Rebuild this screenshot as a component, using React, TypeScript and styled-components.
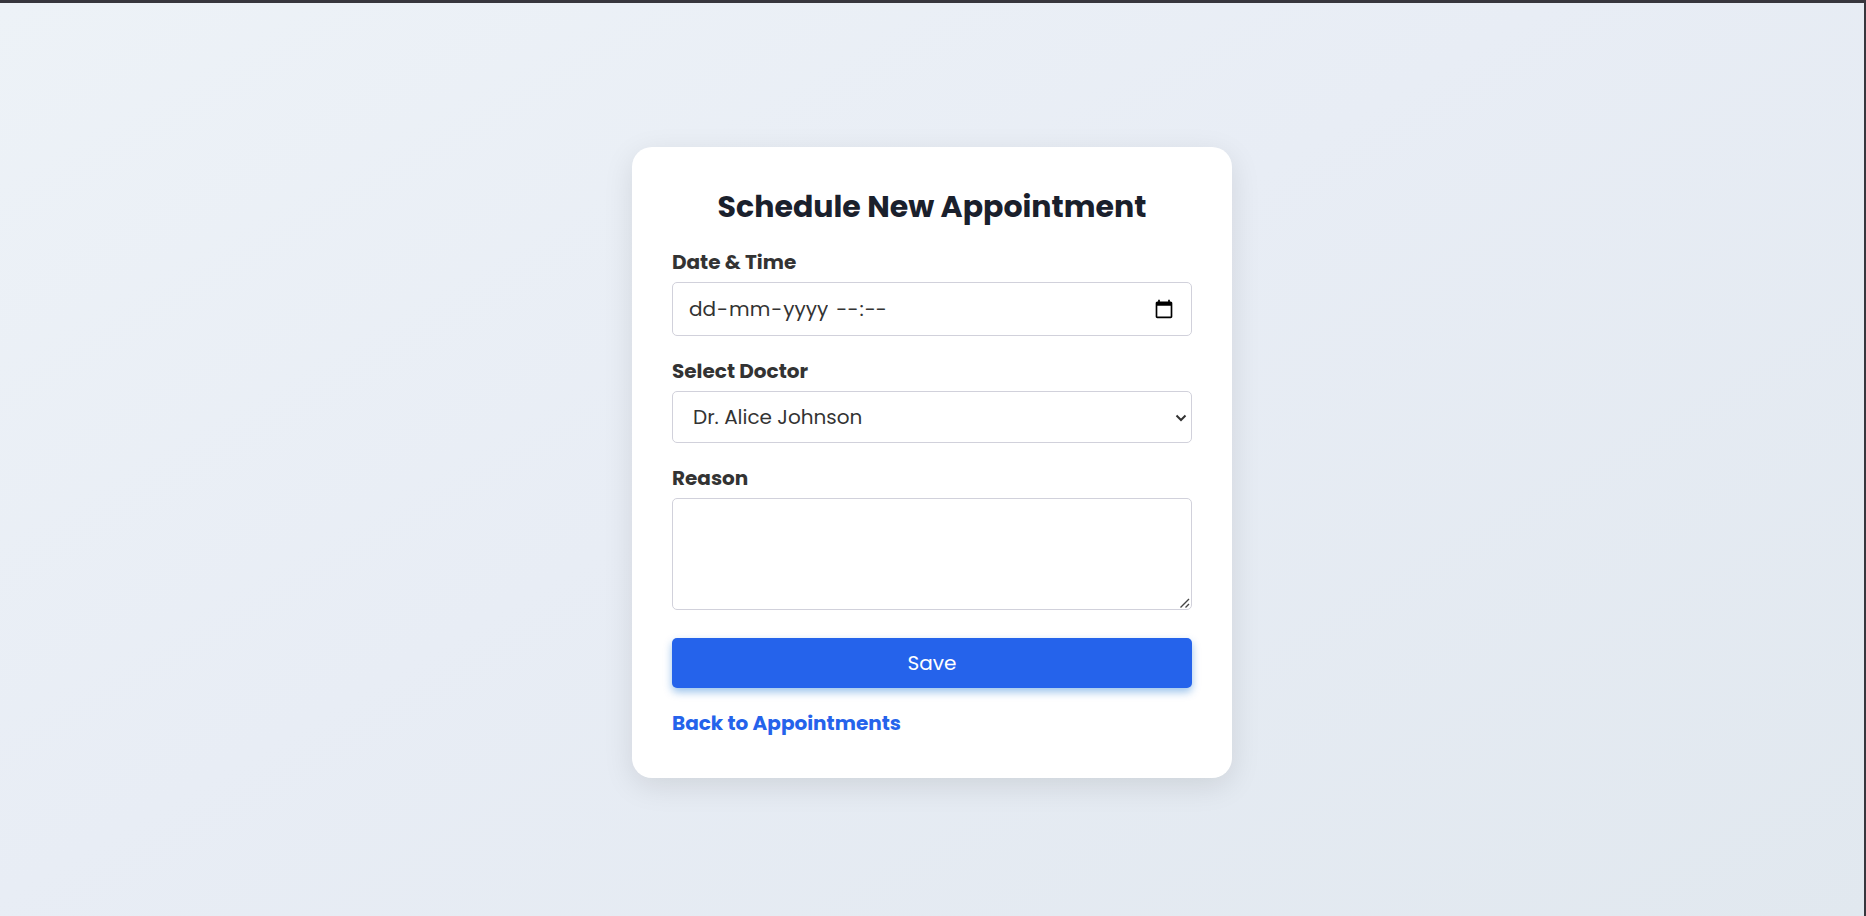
import React from 'react';
import styled, { createGlobalStyle } from 'styled-components';

const GlobalStyle = createGlobalStyle`
  *, *::before, *::after { box-sizing: border-box; }
  body {
    margin: 0;
    color: #333333;
    font-family: Poppins, Inter, "Liberation Sans", sans-serif;
    font-size: 20px;
    line-height: 30px;
  }
`;

const Page = styled.main`
  display: flex;
  align-items: center;
  justify-content: center;
  min-height: 100vh;
  padding: 26px 20px 20px;
  border-top: 3px solid #37363d;
  border-right: 2px solid #37363d;
  background: linear-gradient(150deg, #edf2f7, #e8edf5 45%, #e1e8ef);
  background-origin: border-box;
`;

const Card = styled.form`
  display: flex;
  flex-direction: column;
  width: 100%;
  max-width: 600px;
  padding: 40px;
  border-radius: 20px;
  background: #ffffff;
  box-shadow: 0 8px 30px rgba(0, 0, 0, 0.1);
`;

const Title = styled.h1`
  margin: 0 0 20px;
  color: #1a202c;
  font-size: 30px;
  font-weight: 700;
  line-height: 40px;
  text-align: center;
`;

const Field = styled.div`
  display: flex;
  flex-direction: column;
  gap: 5px;
  margin-bottom: 20px;
`;

const Label = styled.label`
  font-weight: 700;
`;

const control = `
  width: 100%;
  border: 1px solid #d1d1db;
  border-radius: 5px;
  background: #ffffff;
  color: #333333;
  font: inherit;
`;

const ControlWrap = styled.div`
  position: relative;
`;

const DateBox = styled.div`
  ${control}
  display: flex;
  align-items: center;
  height: 54px;
  padding: 0 17px 0 15px;
`;

const DatePart = styled.input`
  field-sizing: content;
  padding: 0 1px;
  border: 0;
  outline: 0;
  background: transparent;
  color: inherit;
  font: inherit;

  &::placeholder { color: inherit; opacity: 1; }
`;

const Separator = styled.span<{ $space?: boolean }>`
  width: ${({ $space }) => ($space ? '6px' : 'auto')};
`;

const PickerButton = styled.button`
  display: flex;
  margin-left: auto;
  padding: 0;
  border: 0;
  background: transparent;
  color: #000000;
  cursor: pointer;
`;

const Select = styled.select`
  ${control}
  display: block;
  height: 52px;
  padding: 0 20px;
  appearance: none;
`;

const SelectArrow = styled.svg`
  position: absolute;
  top: 20px;
  right: 4px;
  pointer-events: none;
`;

const TextArea = styled.textarea`
  ${control}
  display: block;
  height: 112px;
  padding: 10px 16px;
  resize: vertical;

  &::-webkit-resizer { background: transparent; }
`;

const ResizeGrip = styled.svg`
  position: absolute;
  right: 2px;
  bottom: 2px;
  pointer-events: none;
`;

const SaveButton = styled.button`
  height: 50px;
  margin: 8px 0 20px;
  border: 0;
  border-radius: 5px;
  background: #2563eb;
  box-shadow: 0 4px 8px rgba(0, 102, 204, 0.4);
  color: #ffffff;
  font: inherit;
  cursor: pointer;
`;

const BackLink = styled.a`
  align-self: flex-start;
  color: #2563eb;
  font-weight: 700;
  text-decoration: none;
`;

const CalendarIcon = () => (
  <svg width="20" height="20" viewBox="0 0 24 24" fill="currentColor" aria-hidden="true">
    <path d="M20 3h-1V1h-2v2H7V1H5v2H4c-1.100 0-2 .9-2 2v16c0 1.100.9 2 2 2h16c1.100 0 2-.9 2-2V5c0-1.100-.9-2-2-2zm0 18H4V8h16v13z" />
  </svg>
);

export default function App() {
  return (
    <>
      <GlobalStyle />
      <Page>
        <Card onSubmit={(event: React.FormEvent) => event.preventDefault()}>
          <Title>Schedule New Appointment</Title>
          <Field>
            <Label htmlFor="date">Date &amp; Time</Label>
            <DateBox role="group" aria-label="Date and time">
              <DatePart id="date" placeholder="dd" maxLength={2} inputMode="numeric" />
              <Separator>-</Separator>
              <DatePart aria-label="Month" placeholder="mm" maxLength={2} inputMode="numeric" />
              <Separator>-</Separator>
              <DatePart aria-label="Year" placeholder="yyyy" maxLength={4} inputMode="numeric" />
              <Separator $space />
              <DatePart aria-label="Hours" placeholder="--" maxLength={2} inputMode="numeric" />
              <Separator>:</Separator>
              <DatePart aria-label="Minutes" placeholder="--" maxLength={2} inputMode="numeric" />
              <PickerButton type="button" aria-label="Open calendar">
                <CalendarIcon />
              </PickerButton>
            </DateBox>
          </Field>
          <Field>
            <Label htmlFor="doctor">Select Doctor</Label>
            <ControlWrap>
              <Select id="doctor" defaultValue="alice">
                <option value="alice">Dr. Alice Johnson</option>
              </Select>
              <SelectArrow width="14" height="14" viewBox="0 0 14 14" fill="none" stroke="#333333" strokeWidth="2" aria-hidden="true">
                <path d="M2.500 4.500 7 9l4.500-4.500" />
              </SelectArrow>
            </ControlWrap>
          </Field>
          <Field>
            <Label htmlFor="reason">Reason</Label>
            <ControlWrap>
              <TextArea id="reason" />
              <ResizeGrip width="10" height="10" viewBox="0 0 10 10" fill="none" stroke="#444444" strokeWidth="1.400" aria-hidden="true">
                <path d="M.5 9.500 9 1M5.500 9.500 9 6" />
              </ResizeGrip>
            </ControlWrap>
          </Field>
          <SaveButton type="submit">Save</SaveButton>
          <BackLink href="#appointments">Back to Appointments</BackLink>
        </Card>
      </Page>
    </>
  );
}
